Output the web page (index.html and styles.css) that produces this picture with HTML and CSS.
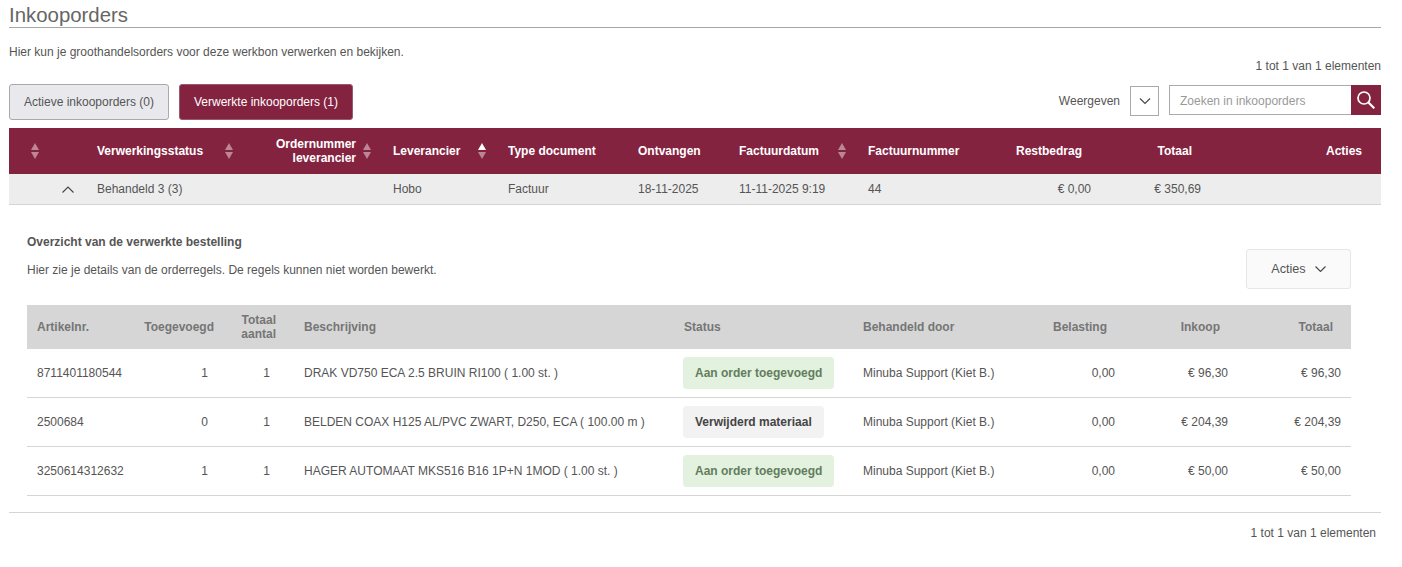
FILE: index.html
```html
<!DOCTYPE html>
<html lang="nl">
<head>
<meta charset="utf-8">
<title>Inkooporders</title>
<link rel="stylesheet" href="styles.css">
</head>
<body>
<svg class="defs" width="0" height="0" aria-hidden="true">
  <symbol id="sort" viewBox="0 0 8 16"><path class="sort-up" d="M4 0 8 7H0Z"/><path class="sort-down" d="M0 9H8L4 16Z"/></symbol>
</svg>
<main class="page">
  <h1 class="title">Inkooporders</h1>
  <p class="intro">Hier kun je groothandelsorders voor deze werkbon verwerken en bekijken.</p>
  <div class="pager">1 tot 1 van 1 elementen</div>
  <div class="toolbar">
    <div class="tabs">
      <button class="tab">Actieve inkooporders (0)</button>
      <button class="tab tab-active">Verwerkte inkooporders (1)</button>
    </div>
    <div class="controls">
      <span class="show-label">Weergeven</span>
      <span class="select"><svg width="12" height="7" viewBox="0 0 12 7"><path class="chev" d="M1 .5 6 5.5 11 .5"/></svg></span>
      <div class="search">
        <input class="search-input" type="text" placeholder="Zoeken in inkooporders">
        <button class="search-btn" aria-label="Zoeken"><svg width="18" height="18" viewBox="0 0 18 18"><circle class="glass" cx="7" cy="7" r="6"/><path class="glass glass-handle" d="M11.5 11.5 17.3 17.3"/></svg></button>
      </div>
    </div>
  </div>

  <table class="orders">
    <colgroup>
      <col class="o1"><col class="o2"><col class="o3"><col class="o4"><col class="o5"><col class="o6"><col class="o7"><col class="o8"><col class="o9"><col class="o10"><col>
    </colgroup>
    <thead>
      <tr>
        <th class="th-first"><svg class="sort" width="8" height="16"><use href="#sort"/></svg></th>
        <th><div class="th-flex"><span>Verwerkingsstatus</span><svg class="sort" width="8" height="16"><use href="#sort"/></svg></div></th>
        <th><div class="th-flex th-end"><span class="th-right">Ordernummer<br>leverancier</span><svg class="sort" width="8" height="16"><use href="#sort"/></svg></div></th>
        <th><div class="th-flex"><span>Leverancier</span><svg class="sort sort-asc" width="8" height="16"><use href="#sort"/></svg></div></th>
        <th>Type document</th>
        <th>Ontvangen</th>
        <th><div class="th-flex"><span>Factuurdatum</span><svg class="sort" width="8" height="16"><use href="#sort"/></svg></div></th>
        <th>Factuurnummer</th>
        <th class="num">Restbedrag</th>
        <th class="num">Totaal</th>
        <th class="num">Acties</th>
      </tr>
    </thead>
    <tbody>
      <tr>
        <td class="td-toggle"><svg width="12" height="7" viewBox="0 0 12 7"><path class="chev" d="M.5 6.5 6 1 11.5 6.5"/></svg></td>
        <td>Behandeld 3 (3)</td>
        <td></td>
        <td>Hobo</td>
        <td>Factuur</td>
        <td>18-11-2025</td>
        <td>11-11-2025 9:19</td>
        <td>44</td>
        <td class="num">€ 0,00</td>
        <td class="num">€ 350,69</td>
        <td></td>
      </tr>
    </tbody>
  </table>

  <section class="detail">
    <div class="detail-head">
      <div>
        <h2 class="detail-title">Overzicht van de verwerkte bestelling</h2>
        <p class="detail-text">Hier zie je details van de orderregels. De regels kunnen niet worden bewerkt.</p>
      </div>
      <button class="actions">Acties <svg width="11" height="6" viewBox="0 0 11 6"><path class="chev" d="M.5.5 5.5 5.5 10.5.5"/></svg></button>
    </div>
    <table class="lines">
      <colgroup>
        <col class="l1"><col class="l2"><col class="l3"><col class="l4"><col class="l5"><col class="l6"><col class="l7"><col class="l8"><col>
      </colgroup>
      <thead>
        <tr>
          <th>Artikelnr.</th>
          <th class="num">Toegevoegd</th>
          <th class="num">Totaal<br>aantal</th>
          <th>Beschrijving</th>
          <th>Status</th>
          <th>Behandeld door</th>
          <th class="num">Belasting</th>
          <th class="num">Inkoop</th>
          <th class="num">Totaal</th>
        </tr>
      </thead>
      <tbody>
        <tr>
          <td>8711401180544</td><td class="num qty">1</td><td class="num qty2">1</td>
          <td>DRAK VD750 ECA 2.5 BRUIN RI100 ( 1.00 st. )</td>
          <td class="td-status"><span class="badge badge-green">Aan order toegevoegd</span></td>
          <td>Minuba Support (Kiet B.)</td><td class="num">0,00</td><td class="num">€ 96,30</td><td class="num">€ 96,30</td>
        </tr>
        <tr>
          <td>2500684</td><td class="num qty">0</td><td class="num qty2">1</td>
          <td>BELDEN COAX H125 AL/PVC ZWART, D250, ECA ( 100.00 m )</td>
          <td class="td-status"><span class="badge badge-grey">Verwijderd materiaal</span></td>
          <td>Minuba Support (Kiet B.)</td><td class="num">0,00</td><td class="num">€ 204,39</td><td class="num">€ 204,39</td>
        </tr>
        <tr>
          <td>3250614312632</td><td class="num qty">1</td><td class="num qty2">1</td>
          <td>HAGER AUTOMAAT MKS516 B16 1P+N 1MOD ( 1.00 st. )</td>
          <td class="td-status"><span class="badge badge-green">Aan order toegevoegd</span></td>
          <td>Minuba Support (Kiet B.)</td><td class="num">0,00</td><td class="num">€ 50,00</td><td class="num">€ 50,00</td>
        </tr>
      </tbody>
    </table>
  </section>

  <div class="footer">1 tot 1 van 1 elementen</div>
</main>
</body>
</html>
```
FILE: styles.css
```css
* { box-sizing: border-box; }
html, body { margin: 0; padding: 0; background: #fff; }
body { font: 12px/14px "Liberation Sans", Arial, sans-serif; color: #555; overflow: hidden; }
.defs { display: block; height: 0; }
.page { padding: 0 21px 0 9px; }

.title { margin: 0; height: 28px; font-size: 20.4px; font-weight: 400; line-height: 30px; color: #666; border-bottom: 1px solid #a6a6a6; }
.intro { margin: 17px 0 0; }
.pager { text-align: right; }

.toolbar { display: flex; justify-content: space-between; align-items: flex-start; margin-top: 11px; height: 36px; }
.tabs { display: flex; gap: 10px; }
.tab { height: 36px; width: 160px; padding: 0; font: inherit; color: #555; background: #e9e9ed; border: 1px solid #aaa; border-radius: 3px; }
.tab-active { width: 174px; color: #fff; background: #842340; border-color: #9a5a6e; }
.controls { display: flex; align-items: flex-start; margin-top: 1px; }
.show-label { line-height: 32px; margin-right: 10px; }
.select { display: flex; align-items: center; justify-content: center; width: 29px; height: 30px; margin: 1px 10px 0 0; border: 1px solid #aaa; }
.chev { fill: none; stroke: #444; stroke-width: 1.1; }
.search { display: flex; }
.search-input { width: 182px; height: 30px; padding: 2px 10px 0; font: inherit; color: #555; border: 1px solid #aaa; border-right: 0; border-radius: 0; outline: 0; }
.search-input::placeholder { color: #999; opacity: 1; }
.search-btn { display: flex; align-items: center; justify-content: center; width: 30px; height: 30px; padding: 0; background: #842340; border: 0; }
.glass { fill: none; stroke: #fff; stroke-width: 1.7; }
.glass-handle { stroke-width: 2.2; }

table { width: 100%; border-collapse: separate; border-spacing: 0; table-layout: fixed; }
th, td { padding: 0 10px; text-align: left; }

.orders { margin-top: 8px; }
.o1 { width: 78px; } .o2 { width: 158px; } .o3 { width: 138px; } .o4 { width: 115px; } .o5 { width: 130px; }
.o6 { width: 101px; } .o7 { width: 129px; } .o8 { width: 130px; } .o9 { width: 113px; } .o10 { width: 110px; }
.orders th { height: 46px; font-weight: 700; color: #fff; background: #842340; }
.orders th.num { text-align: right; padding-right: 19px; }
.orders .th-first { padding-left: 22px; }
.orders td { height: 31px; background: #ededed; border-bottom: 1px solid #d5d5d5; }
.orders td.num { text-align: right; }
.orders .td-toggle { text-align: right; padding-right: 13px; }
.td-toggle svg { display: block; margin-left: auto; }
.th-flex { display: flex; align-items: center; justify-content: space-between; padding-right: 2px; }
.th-end { justify-content: flex-end; gap: 7px; }
.th-right { text-align: right; }
.sort { display: block; flex: none; --up: rgba(255,255,255,.45); }
.sort-asc { --up: #fff; }
.sort-up { fill: var(--up); }
.sort-down { fill: rgba(255,255,255,.45); }

.detail { padding: 30px 30px 16px 18px; border-bottom: 1px solid #d5d5d5; }
.detail-head { display: flex; justify-content: space-between; align-items: flex-start; height: 54px; margin-bottom: 16px; }
.detail-title { margin: 0; font-size: 12px; font-weight: 700; line-height: 14px; }
.detail-text { margin: 14px 0 0; }
.actions { display: flex; align-items: center; justify-content: center; gap: 9px; width: 105px; height: 40px; margin-top: 14px; padding: 0; font: 12.6px/14px "Liberation Sans", Arial, sans-serif; color: #555; background: #fafafa; border: 1px solid #e6e6e6; border-radius: 3px; }

.l1 { width: 107px; } .l2 { width: 90px; } .l3 { width: 70px; } .l4 { width: 380px; } .l5 { width: 179px; }
.l6 { width: 190px; } .l7 { width: 82px; } .l8 { width: 113px; }
.lines th { height: 44px; font-weight: 700; color: #757575; background: #d6d6d6; }
.lines th.num { text-align: right; padding-right: 18px; }
.lines th:nth-child(2) { padding-right: 10px; }
.lines td { height: 49px; border-bottom: 1px solid #d5d5d5; }
.lines td.num { text-align: right; }
.lines td.qty { padding-right: 16px; }
.lines td.qty2 { padding-right: 24px; }
.lines .td-status { padding-left: 9px; }
.badge { display: inline-block; height: 32px; padding: 0 12px; font-weight: 700; line-height: 32px; border-radius: 4px; vertical-align: middle; }
.badge-green { color: #627d5c; background: #e3f1df; }
.badge-grey { color: #444; background: #f2f2f2; }

.footer { margin-top: 13px; padding-right: 5px; text-align: right; }
```
